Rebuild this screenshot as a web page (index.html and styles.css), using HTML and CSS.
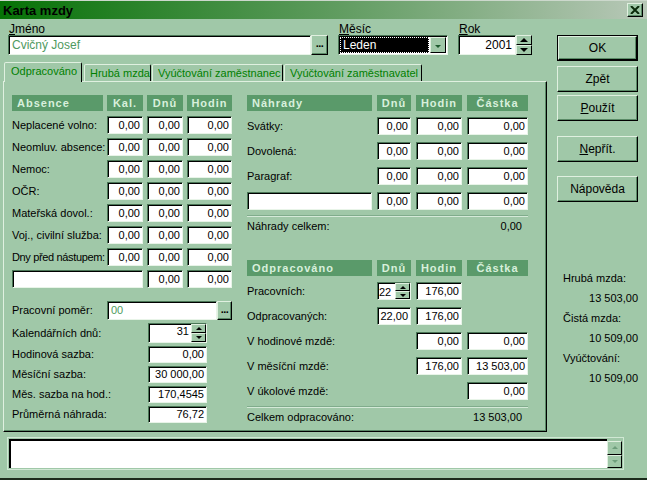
FILE: index.html
```html
<!DOCTYPE html>
<html lang="cs">
<head>
<meta charset="utf-8">
<title>Karta mzdy</title>
<link rel="stylesheet" href="styles.css">
</head>
<body>
<div class="window">
  <div class="titlebar">
    <span class="title">Karta mzdy</span>
    <span class="close"><svg width="10" height="8" viewBox="0 0 10 8"><path d="M1 0 L9 8 M9 0 L1 8" stroke="#0a2a0a" stroke-width="2" fill="none"/></svg></span>
  </div>
  <div class="body">
    <div class="leftpane">
      <div class="fields">
        <div class="field f-name">
          <div class="flabel"><u>J</u>méno</div>
          <div class="ctl">
            <div class="input name">Cvičný Josef</div>
            <div class="btn dots">...</div>
          </div>
        </div>
        <div class="field f-month">
          <div class="flabel"><u>M</u>ěsíc</div>
          <div class="ctl combo">
            <div class="sel">Leden</div>
            <div class="drop"><i class="tri-s"></i></div>
          </div>
        </div>
        <div class="field f-year">
          <div class="flabel"><u>R</u>ok</div>
          <div class="ctl">
            <div class="input year">2001</div>
            <div class="spin"><span class="up"></span><span class="down"></span></div>
          </div>
        </div>
      </div>
      <div class="tabs">
        <div class="tab active t1">Odpracováno</div>
        <div class="tab t2">Hrubá mzda</div>
        <div class="tab t3">Vyúčtování zaměstnanec</div>
        <div class="tab t4">Vyúčtování zaměstnavatel</div>
      </div>
      <div class="panel">
        <div class="col-left">
          <div class="grid abs">
            <div class="hd hl">Absence</div><div class="hd">Kal.</div><div class="hd">Dnů</div><div class="hd">Hodin</div>
            <div class="lbl">Neplacené volno:</div><div class="box">0,00</div><div class="box">0,00</div><div class="box">0,00</div>
            <div class="lbl">Neomluv. absence:</div><div class="box">0,00</div><div class="box">0,00</div><div class="box">0,00</div>
            <div class="lbl">Nemoc:</div><div class="box">0,00</div><div class="box">0,00</div><div class="box">0,00</div>
            <div class="lbl">OČR:</div><div class="box">0,00</div><div class="box">0,00</div><div class="box">0,00</div>
            <div class="lbl">Mateřská dovol.:</div><div class="box">0,00</div><div class="box">0,00</div><div class="box">0,00</div>
            <div class="lbl">Voj., civilní služba:</div><div class="box">0,00</div><div class="box">0,00</div><div class="box">0,00</div>
            <div class="lbl tight">Dny před nástupem:</div><div class="box">0,00</div><div class="box">0,00</div><div class="box">0,00</div>
            <div class="box wide2"></div><div class="box">0,00</div><div class="box">0,00</div>
          </div>
          <div class="pp">
            <div class="pplbl">Pracovní poměr:</div>
            <div class="input ppin">00</div>
            <div class="btn dots ppbtn">...</div>
          </div>
          <div class="grid params">
            <div class="lbl">Kalendářních dnů:</div>
            <div class="box spinbox"><span class="val">31</span><div class="spin small"><span class="up"></span><span class="down"></span></div></div>
            <div class="lbl">Hodinová sazba:</div><div class="box">0,00</div>
            <div class="lbl">Měsíční sazba:</div><div class="box">30 000,00</div>
            <div class="lbl">Měs. sazba na hod.:</div><div class="box">170,4545</div>
            <div class="lbl">Průměrná náhrada:</div><div class="box">76,72</div>
          </div>
        </div>
        <div class="col-right">
          <div class="grid nah">
            <div class="hd hl">Náhrady</div><div class="hd">Dnů</div><div class="hd">Hodin</div><div class="hd">Částka</div>
            <div class="lbl">Svátky:</div><div class="box">0,00</div><div class="box">0,00</div><div class="box">0,00</div>
            <div class="lbl">Dovolená:</div><div class="box">0,00</div><div class="box">0,00</div><div class="box">0,00</div>
            <div class="lbl">Paragraf:</div><div class="box">0,00</div><div class="box">0,00</div><div class="box">0,00</div>
            <div class="box"></div><div class="box">0,00</div><div class="box">0,00</div><div class="box">0,00</div>
          </div>
          <div class="sep"></div>
          <div class="total"><span>Náhrady celkem:</span><span>0,00</span></div>
          <div class="grid odp">
            <div class="hd hl">Odpracováno</div><div class="hd">Dnů</div><div class="hd">Hodin</div><div class="hd">Částka</div>
            <div class="lbl">Pracovních:</div>
            <div class="box spinbox sb2"><span class="val">22</span><div class="spin small"><span class="up"></span><span class="down"></span></div></div>
            <div class="box">176,00</div><div></div>
            <div class="lbl">Odpracovaných:</div><div class="box">22,00</div><div class="box">176,00</div><div></div>
            <div class="lbl">V hodinové mzdě:</div><div></div><div class="box">0,00</div><div class="box">0,00</div>
            <div class="lbl">V měsíční mzdě:</div><div></div><div class="box">176,00</div><div class="box">13 503,00</div>
            <div class="lbl">V úkolové mzdě:</div><div></div><div></div><div class="box">0,00</div>
          </div>
          <div class="sep sep2"></div>
          <div class="total"><span>Celkem odpracováno:</span><span>13 503,00</span></div>
        </div>
      </div>
    </div>
    <div class="rightpane">
      <div class="btn big ok"><span>OK</span></div>
      <div class="btn big b-zpet">Zpět</div>
      <div class="btn big b-pouzit"><span><u>P</u>oužít</span></div>
      <div class="btn big b-neprit"><span><u>N</u>epřít.</span></div>
      <div class="btn big b-napoveda">Nápověda</div>
      <div class="sums">
        <div class="slbl">Hrubá mzda:</div>
        <div class="sval">13 503,00</div>
        <div class="slbl">Čistá mzda:</div>
        <div class="sval">10 509,00</div>
        <div class="slbl">Vyúčtování:</div>
        <div class="sval">10 509,00</div>
      </div>
    </div>
  </div>
  <div class="memo">
    <div class="memo-text"></div>
    <div class="vscroll">
      <span class="sbtn"><i class="tri-up"></i></span>
      <span class="sbtn"><i class="tri-down"></i></span>
    </div>
  </div>
</div>
</body>
</html>
```

FILE: styles.css
```css
* { box-sizing: border-box; margin: 0; padding: 0; }
html, body { width: 647px; height: 480px; overflow: hidden; }
body {
  background: #a0c8a8;
  font-family: "Liberation Sans", Arial, sans-serif;
  font-size: 11px;
  color: #000;
}
.window {
  height: 480px;
  display: flex;
  flex-direction: column;
  border-bottom: 2px solid #1c2c1c;
}
.titlebar {
  height: 19px;
  border-top: 1px solid #ccd8cc;
  background: linear-gradient(to right, #067206, #5c9a5c 50%, #b8c8b8);
  display: flex;
  align-items: center;
  justify-content: space-between;
  padding: 0 4px 0 3px;
}
.title { font-weight: bold; font-size: 13px; color: #000; }
.close {
  width: 16px; height: 14px;
  background: #a0c8a8;
  border: 1px solid;
  border-color: #e0f0e0 #000 #000 #e0f0e0;
  box-shadow: inset -1px -1px 0 #5a8a66;
  display: flex; align-items: center; justify-content: center;
}
.close svg { display: block; }

.body { display: flex; padding-top: 5px; }
.leftpane { width: 547px; padding-left: 3px; }

.fields { display: flex; padding-left: 5px; }
.flabel { height: 11px; line-height: 11px; padding-left: 1px; font-size: 12px; }
.f-name { width: 320px; margin-right: 10px; }
.f-month { width: 110px; margin-right: 10px; }
.f-year { width: 74px; }
.ctl { display: flex; height: 20px; }

.input {
  background: #fff;
  border: 1px solid;
  border-color: #4a7656 #e8f4e8 #e8f4e8 #4a7656;
  box-shadow: inset 1px 1px 0 #000;
  line-height: 18px;
  white-space: nowrap;
}
.name { width: 303px; padding-left: 3px; color: #4f9a5e; font-size: 12px; }
.year { width: 58px; text-align: right; padding-right: 3px; font-size: 12px; }

.btn {
  background: #a0c8a8;
  border: 1px solid;
  border-color: #e0f0e0 #000 #000 #e0f0e0;
  box-shadow: inset -1px -1px 0 #5a8a66;
  display: flex; align-items: center; justify-content: center;
}
.dots { width: 17px; font-weight: bold; line-height: 10px; padding-bottom: 4px; letter-spacing: -0.5px; }

.combo {
  width: 110px;
  background: #fff;
  border: 1px solid;
  border-color: #4a7656 #e8f4e8 #e8f4e8 #4a7656;
  box-shadow: inset 1px 1px 0 #000;
  padding: 1px 1px 1px 1px;
}
.combo .sel {
  flex: 1;
  background: #000;
  color: #fff;
  font-size: 12px;
  line-height: 16px;
  padding-left: 3px;
  outline: 1px dotted #fff;
  outline-offset: -1px;
  margin-right: 1px;
}
.combo .drop {
  width: 16px;
  background: #a0c8a8;
  border: 1px solid;
  border-color: #e0f0e0 #000 #000 #e0f0e0;
  display: flex; align-items: center; justify-content: center;
}
.tri-s {
  display: block; width: 0; height: 0;
  border-left: 3px solid transparent;
  border-right: 3px solid transparent;
  border-top: 3px solid #1e5a2e;
  margin-top: 2px;
}

.spin { width: 16px; display: flex; flex-direction: column; }
.spin span {
  flex: 1;
  background: #a0c8a8;
  border: 1px solid;
  border-color: #e0f0e0 #000 #000 #e0f0e0;
  display: flex; align-items: center; justify-content: center;
}
.spin .up::after {
  content: ""; display: block; width: 0; height: 0;
  border-left: 4px solid transparent;
  border-right: 4px solid transparent;
  border-bottom: 4px solid #000;
}
.spin .down::after {
  content: ""; display: block; width: 0; height: 0;
  border-left: 4px solid transparent;
  border-right: 4px solid transparent;
  border-top: 4px solid #000;
}

.tabs {
  display: flex;
  align-items: flex-end;
  height: 20px;
  margin-top: 7px;
  padding-left: 1px;
  position: relative;
  z-index: 2;
}
.tab {
  height: 17px;
  margin-bottom: 1px;
  border: 1px solid;
  border-bottom: none;
  border-color: #e0f0e0 #000 transparent #e0f0e0;
  border-radius: 2px 2px 0 0;
  color: #008000;
  font-size: 11px;
  line-height: 16px;
  padding-left: 5px;
  white-space: nowrap;
  overflow: hidden;
  background: #a0c8a8;
}
.tab.active { height: 20px; margin-bottom: 0; padding-left: 6px; line-height: 17px; }
.t1 { width: 78px; }
.t2 { width: 67px; margin-left: 2px; }
.t3 { width: 131px; margin-left: 1px; }
.t4 { width: 138px; margin-left: 1px; }

.panel {
  margin-top: -1px;
  width: 544px;
  height: 351px;
  border: 1px solid;
  border-color: #e0f0e0 #000 #000 #e0f0e0;
  box-shadow: inset -1px -1px 0 #5a8a66;
  padding: 13px 0 0 8px;
  display: flex;
  gap: 15px;
  position: relative;
  z-index: 1;
}
.col-left { width: 220px; }
.col-right { width: 281px; }

.grid { display: grid; }
.abs {
  grid-template-columns: 91px 36px 36px 45px;
  grid-template-rows: 17px repeat(8, 18px);
  column-gap: 4px;
  row-gap: 4px;
}
.hd {
  background: #5a9a6a;
  color: #d8f0dc;
  font-weight: bold;
  font-size: 11px;
  letter-spacing: 1px;
  text-align: center;
  height: 16px;
  line-height: 16px;
  align-self: start;
  white-space: nowrap;
}
.hd.hl { text-align: left; padding-left: 5px; }
.lbl { line-height: 18px; white-space: nowrap; }
.lbl.tight { letter-spacing: -0.35px; }
.box {
  background: #fff;
  border: 1px solid;
  border-color: #4a7656 #e8f4e8 #e8f4e8 #4a7656;
  box-shadow: inset 1px 1px 0 #000;
  text-align: right;
  padding-right: 2px;
  line-height: 16px;
  height: 18px;
  white-space: nowrap;
}
.wide2 { grid-column: span 2; }

.pp { display: flex; height: 19px; margin-top: 13px; }
.pplbl { width: 95px; line-height: 19px; white-space: nowrap; }
.ppin { width: 110px; color: #4f9a5e; padding-left: 3px; line-height: 17px; }
.ppbtn { width: 15px; }

.params {
  margin-top: 3px;
  grid-template-columns: 136px 59px;
  grid-template-rows: 20px 17px 17px 17px 17px;
  row-gap: 3px;
}
.params .lbl { line-height: 17px; }
.params .lbl:first-child { line-height: 20px; }
.params .box { height: 17px; line-height: 15px; }
.params .spinbox { height: 20px; }
.spinbox { display: flex; justify-content: flex-end; padding-right: 0; line-height: 18px; }
.spinbox .val { padding-right: 2px; }
.spin.small { width: 15px; }
.spin.small .up::after { border-left-width: 3px; border-right-width: 3px; border-bottom-width: 3px; }
.spin.small .down::after { border-left-width: 3px; border-right-width: 3px; border-top-width: 3px; }
.sb2 .val { flex: 1; text-align: left; padding-left: 1px; }

.nah {
  grid-template-columns: 125px 34px 46px 61px;
  grid-template-rows: 15px repeat(4, 18px);
  column-gap: 5px;
  row-gap: 7px;
}
.odp {
  margin-top: 27px;
  grid-template-columns: 125px 34px 46px 61px;
  grid-template-rows: 15px repeat(5, 18px);
  column-gap: 5px;
  row-gap: 7px;
}
.sep {
  margin-top: 5px;
  height: 2px;
  width: 281px;
  border-top: 1px solid #80ac8c;
  border-bottom: 1px solid #d4ead8;
}
.sep2 { margin-top: 6px; }
.total {
  display: flex;
  justify-content: space-between;
  padding-right: 6px;
  margin-top: 2px;
  line-height: 14px;
}

.rightpane { padding: 11px 0 0 10px; width: 100px; }
.big { width: 81px; height: 26px; font-size: 12px; }
.ok {
  border: 1px solid #000;
  box-shadow: none;
  padding: 0;
}
.ok span {
  width: 100%; height: 100%;
  display: flex; align-items: center; justify-content: center;
  border: 1px solid;
  border-color: #e0f0e0 #000 #000 #e0f0e0;
  box-shadow: inset -1px -1px 0 #5a8a66;
}
.b-zpet { margin-top: 5px; }
.b-pouzit { margin-top: 3px; }
.b-neprit { margin-top: 15px; }
.b-napoveda { margin-top: 14px; }

.sums { margin-top: 66px; width: 81px; }
.slbl { line-height: 20px; padding-left: 6px; white-space: nowrap; }
.sval { line-height: 20px; text-align: right; padding-right: 0; white-space: nowrap; }

.memo {
  margin: 5px 0 0 7px;
  width: 617px;
  height: 33px;
  border: 1px solid #d0e8d4;
  display: flex;
  padding: 1px 1px 1px 1px;
}
.memo-text {
  flex: 1;
  background: #fff;
  border-top: 2px solid #000;
  border-left: 2px solid #000;
}
.vscroll { width: 15px; display: flex; flex-direction: column; padding-top: 2px; }
.sbtn {
  flex: 1;
  background: #a0c8a8;
  border: 1px solid;
  border-color: #e0f0e0 #000 #000 #e0f0e0;
  display: flex; align-items: center; justify-content: center;
}
.tri-up {
  display: block; width: 0; height: 0;
  border-left: 3px solid transparent;
  border-right: 3px solid transparent;
  border-bottom: 3px solid #6e9e7c;
}
.tri-down {
  display: block; width: 0; height: 0;
  border-left: 3px solid transparent;
  border-right: 3px solid transparent;
  border-top: 3px solid #6e9e7c;
}
```
